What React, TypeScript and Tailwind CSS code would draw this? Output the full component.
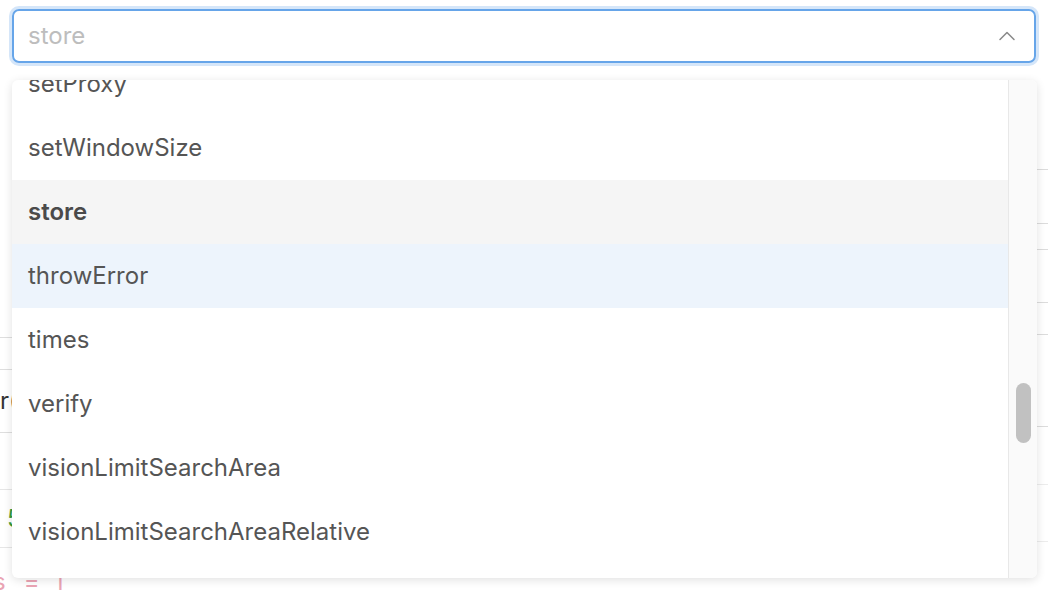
import { ChevronUp } from "lucide-react";

const items = [
  "setProxy",
  "setWindowSize",
  "store",
  "throwError",
  "times",
  "verify",
  "visionLimitSearchArea",
  "visionLimitSearchAreaRelative",
  "waitForElementNotPresent",
];

const selected = "store";
const hovered = "throwError";

export default function App() {
  return (
    <div
      className="relative w-[1048px] h-[590px] overflow-hidden bg-white"
      style={{ fontFamily: "Inter, 'Noto Sans', sans-serif" }}
    >
      {/* search box */}
      <div className="px-[12px] pt-[9px] pb-[7px]">
        <div className="h-[54px] flex items-center justify-between rounded-[7px] border-2 border-[#66a5e9] ring-[3px] ring-[#d5e6f9] pl-[14px] pr-[13px]">
          <span className="text-[24px] text-[#bdbdbd]">store</span>
          <ChevronUp className="w-[28px] h-[28px] text-[#8a8a8a]" strokeWidth={1.3} />
        </div>
      </div>

      {/* page content behind the menu */}
      <div className="flex justify-between">
        <div className="w-[12px] flex flex-col">
          <div className="h-[268px] border-b border-[#dedede]" />
          <div className="h-[32px] border-b border-[#dedede]" />
          <div className="h-[63px] border-b border-[#dedede] flex items-center text-[24px] text-[#333] leading-none">
            r(
          </div>
          <div className="h-[57px] border-b border-[#e6e6e6]" />
          <div className="h-[58px] border-b border-[#e6e6e6] flex items-center pl-[7px] text-[24px] text-[#3a9a3a] leading-none">
            5
          </div>
        </div>
        <div className="w-[11px] flex flex-col">
          <div className="h-[100px] border-b border-[#dcdcdc]" />
          <div className="h-[54px] border-b border-[#dcdcdc]" />
          <div className="h-[26px] border-b border-[#dcdcdc]" />
          <div className="h-[53px] border-b border-[#dcdcdc]" />
          <div className="h-[32px] border-b border-[#dcdcdc]" />
          <div className="h-[92px] border-b border-[#dcdcdc]" />
          <div className="h-[58px] border-b border-[#ececec]" />
          <div className="h-[57px] border-b border-[#ececec]" />
        </div>
      </div>
      <div className="absolute left-[-7px] top-[570px] flex gap-[18px] text-[24px] text-[#eaa4b4] leading-none">
        <span>s</span>
        <span>=</span>
        <span>j</span>
      </div>

      {/* dropdown menu */}
      <div className="absolute left-[12px] top-[80px] w-[1025px] h-[498px] flex bg-white rounded-[6px] overflow-hidden shadow-[0_2px_10px_rgba(0,0,0,0.12)]">
        <div className="flex-1 overflow-hidden">
          <div className="-mt-[28px]">
            {items.map((item) => (
              <div
                key={item}
                className={
                  "h-[64px] flex items-center px-[16px] text-[24px] " +
                  (item === selected
                    ? "bg-[#f5f5f5] font-semibold text-[#4a4a4a]"
                    : item === hovered
                    ? "bg-[#edf4fc] text-[#555555]"
                    : "text-[#555555]")
                }
              >
                {item}
              </div>
            ))}
          </div>
        </div>
        <div className="w-[29px] bg-[#fafafa] border-l border-[#e8e8e8] flex flex-col items-center">
          <div className="mt-[303px] w-[15px] h-[60px] rounded-full bg-[#c1c1c1]" />
        </div>
      </div>
    </div>
  );
}
